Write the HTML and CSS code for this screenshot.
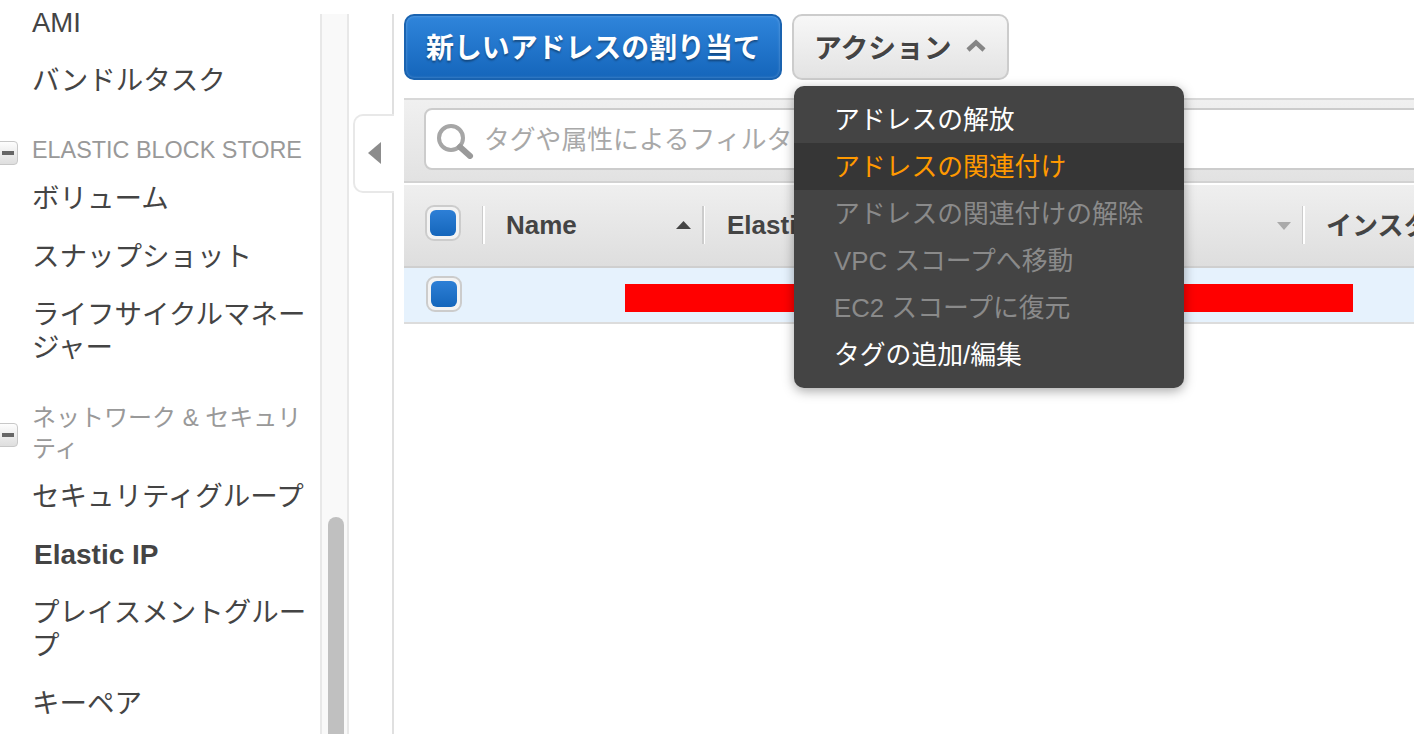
FILE: index.html
```html
<!DOCTYPE html>
<html lang="ja">
<head>
<meta charset="utf-8">
<title>Elastic IP</title>
<link rel="stylesheet" href="styles.css">
</head>
<body>
<div class="page">
  <nav class="sidebar">
    <a class="item">AMI</a>
    <a class="item">バンドルタスク</a>
    <div class="group"><span class="minus"></span><span class="group-title">ELASTIC BLOCK STORE</span></div>
    <a class="item">ボリューム</a>
    <a class="item">スナップショット</a>
    <a class="item">ライフサイクルマネージャー</a>
    <div class="group"><span class="minus"></span><span class="group-title jp">ネットワーク &amp; セキュリティ</span></div>
    <a class="item">セキュリティグループ</a>
    <a class="item current">Elastic IP</a>
    <a class="item">プレイスメントグループ</a>
    <a class="item">キーペア</a>
  </nav>
  <div class="track"><div class="thumb"></div></div>
  <div class="gutter">
    <div class="collapse">
      <svg width="13" height="22" viewBox="0 0 13 22"><path d="M13 0V22L0 11Z" fill="#8c8c8c"/></svg>
    </div>
  </div>
  <main class="main">
    <div class="toolbar">
      <button class="btn primary"><span class="btn-label">新しいアドレスの割り当て</span></button>
      <button class="btn secondary"><span class="btn-label">アクション</span>
        <svg class="caret" width="20" height="13" viewBox="0 0 20 13"><path d="M2 11L10 3.500L18 11" fill="none" stroke="#858585" stroke-width="4.500"/></svg>
      </button>
    </div>
    <div class="panel">
      <div class="filter-bar">
        <div class="search">
          <svg width="38" height="36" viewBox="0 0 38 36"><circle cx="15" cy="15" r="12" fill="none" stroke="#a6a6a6" stroke-width="4"/><path d="M24 24L34 33" stroke="#999" stroke-width="6" stroke-linecap="round"/></svg>
          <span class="placeholder">タグや属性によるフィルタ</span>
        </div>
      </div>
      <div class="thead">
        <div class="cell check-cell"><span class="check"></span></div>
        <div class="cell name-cell">Name<svg width="15" height="8" viewBox="0 0 15 8"><path d="M7.5 0L15 8H0Z" fill="#444"/></svg></div>
        <div class="cell ip-cell">Elastic IP<svg width="14" height="8" viewBox="0 0 14 8"><path d="M0 0H14L7 8Z" fill="#aaa"/></svg></div>
        <div class="cell last-cell">インスタンス</div>
      </div>
      <div class="row">
        <div class="row-check"><span class="check"></span></div>
        <div class="redact"></div>
      </div>
    </div>
    <ul class="menu">
      <li class="menu-item">アドレスの解放</li>
      <li class="menu-item hover">アドレスの関連付け</li>
      <li class="menu-item off">アドレスの関連付けの解除</li>
      <li class="menu-item off">VPC スコープへ移動</li>
      <li class="menu-item off">EC2 スコープに復元</li>
      <li class="menu-item">タグの追加/編集</li>
    </ul>
  </main>
</div>
</body>
</html>
```
FILE: styles.css
```css
* { box-sizing: border-box; }
html, body { margin: 0; height: 100%; overflow: hidden; background: #fff; }
body { font-family: "Liberation Sans", "Noto Sans CJK JP", sans-serif; color: #444; }
.page { display: flex; height: 734px; width: 1414px; overflow: hidden; }

.sidebar { width: 320px; flex: none; padding-top: 6px; overflow: hidden; }
.item { display: block; padding-left: 32px; padding-right: 8px; font-size: 27.5px; line-height: 33px; margin-bottom: 25px; }
.item.current { font-weight: 700; font-size: 28px; padding-left: 34px; }
.group { display: flex; align-items: center; margin-top: 38px; margin-bottom: 16px; margin-left: -4px; }
.minus { width: 22px; height: 24px; flex: none; margin-top: 4px; border: 1px solid #c8c8c8; border-radius: 4px; background: linear-gradient(#fdfdfd, #dedede); position: relative; margin-right: 14px; }
.minus::after { content: ""; position: absolute; left: 5px; right: 3px; top: 9px; height: 4px; background: #666; }
.group-title { font-size: 23.4px; line-height: 31px; color: #999; padding-right: 8px; }
.group-title.jp { font-size: 24px; }

.track { width: 29px; flex: none; margin-top: 14px; background: #f9f9f9; border-left: 2px solid #e8e8e8; border-right: 2px solid #e8e8e8; position: relative; }
.thumb { position: absolute; left: 6px; width: 16px; top: 503px; bottom: 0; background: #c0c0c0; border-radius: 8px 8px 0 0; }

.gutter { width: 45px; flex: none; margin-top: 14px; border-right: 2px solid #e0e0e0; position: relative; }
.collapse { position: absolute; left: 4px; right: -2px; top: 100px; height: 79px; background: #fff; border: 2px solid #e8e8e8; border-right: 0; border-radius: 10px 0 0 10px; display: flex; align-items: center; padding-left: 13px; padding-bottom: 2px; }

.main { flex: 1; min-width: 0; margin-left: 10px; padding-top: 14px; position: relative; overflow: hidden; }
.toolbar { display: flex; gap: 10px; height: 84px; }
.btn { height: 66px; font-family: inherit; font-weight: 700; border-radius: 10px; padding: 0; display: flex; align-items: center; }
.btn-label { margin-top: -3px; }
.primary { width: 378px; font-size: 27.9px; color: #fff; border: 2px solid #1a63b0; background: linear-gradient(#2f85db, #1566bb); padding-left: 20px; text-shadow: 0 2px 2px rgba(0,0,0,.35); box-shadow: inset 0 0 3px rgba(255,255,255,.3); }
.secondary { width: 217px; font-size: 27.8px; color: #444; border: 2px solid #ccc; background: linear-gradient(#f7f7f7, #e3e3e3); padding-left: 20px; gap: 14px; text-shadow: 0 1px 1px rgba(255,255,255,.8); }
.caret { margin-top: -4px; }

.panel { width: 100%; }
.filter-bar { height: 85px; border-top: 2px solid #d8d8d8; border-bottom: 2px solid #d2d2d2; background: linear-gradient(#f0f0f0, #e2e2e2); padding: 8px 0 0 20px; }
.search { height: 62px; width: 1100px; background: #fff; border: 2px solid #ccc; border-radius: 8px; display: flex; align-items: center; padding-left: 10px; gap: 10px; }
.search svg { margin-top: 4px; }
.placeholder { font-size: 25.8px; color: #a8a8a8; white-space: nowrap; margin-top: -4px; }

.thead { display: flex; height: 85px; border-top: 2px solid #fff; border-bottom: 2px solid #cfcfcf; background: linear-gradient(#efefef, #dedede); font-weight: 700; font-size: 26px; }
.cell { display: flex; align-items: center; flex: none; height: 100%; white-space: nowrap; position: relative; }
.cell::after { content: ""; position: absolute; right: -1px; top: 21px; height: 38px; width: 3px; background: linear-gradient(90deg, #ccc 50%, #fff 50%); }
.check-cell { width: 80px; padding-left: 21px; }
.check-cell .check { margin-top: -5px; }
.name-cell { width: 220px; padding-left: 22px; justify-content: space-between; padding-right: 13px; }
.ip-cell { width: 600px; padding-left: 23px; justify-content: space-between; padding-right: 13px; }
.name-cell svg { margin-top: -2px; }
.last-cell { padding-left: 22px; padding-bottom: 4px; }
.last-cell::after { display: none; }

.check { display: block; width: 36px; height: 36px; border: 2px solid #ccc; border-radius: 9px; background: #f3f3f3; position: relative; }
.check::after { content: ""; position: absolute; inset: 3px; border-radius: 6px; background: linear-gradient(#2d7fd6, #1566bb); }

.row { display: flex; align-items: center; height: 56px; background: #e6f2fd; border-bottom: 2px solid #dcdcdc; padding-top: 1px; }
.row-check { width: 221px; padding-left: 22px; flex: none; margin-top: -3px; }
.redact { width: 728px; height: 28px; background: #f00; margin-top: 4px; }

.menu { position: absolute; left: 390px; top: 86px; width: 390px; margin: 0; padding: 10px 0; list-style: none; background: #444; border-radius: 10px; box-shadow: 0 3px 12px rgba(0,0,0,.35); }
.menu-item { height: 47px; line-height: 49px; padding-left: 40px; font-size: 25.8px; color: #fff; white-space: nowrap; }
.menu-item.hover { background: #363636; color: #f90; }
.menu-item.off { color: #8a8a8a; }
```
